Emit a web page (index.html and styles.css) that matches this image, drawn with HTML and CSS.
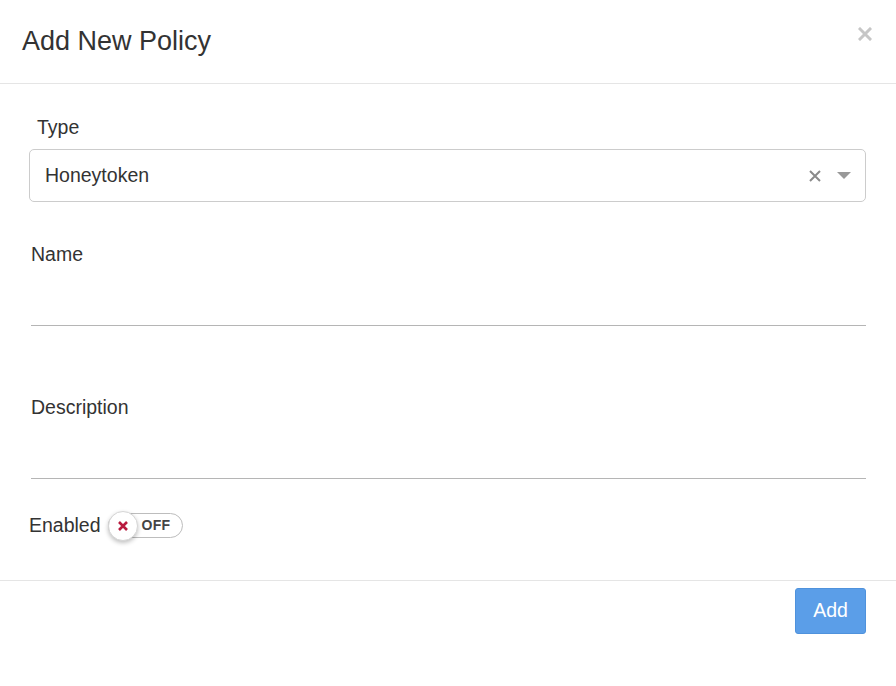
FILE: index.html
```html
<!DOCTYPE html>
<html lang="en">
<head>
<meta charset="utf-8">
<title>Add New Policy</title>
<link rel="stylesheet" href="styles.css">
</head>
<body>
<div class="modal">
  <div class="modal-header">
    <h4 class="modal-title">Add New Policy</h4>
    <button class="close" type="button" aria-label="Close">
      <svg width="14" height="14" viewBox="0 0 14 14"><path d="M2 2L12 12M12 2L2 12" stroke="#c6c6c6" stroke-width="3" stroke-linecap="square"/></svg>
    </button>
  </div>
  <div class="modal-body">
    <div class="group">
      <label class="label label-type">Type</label>
      <div class="select">
        <span class="select-value">Honeytoken</span>
        <span class="select-icons">
          <svg class="clear" width="12" height="12" viewBox="0 0 12 12"><path d="M1 1L11 11M11 1L1 11" stroke="#8a8a8a" stroke-width="2"/></svg>
          <svg class="caret" width="14" height="8" viewBox="0 0 14 8"><path d="M0 0H14L7 7Z" fill="#999"/></svg>
        </span>
      </div>
    </div>
    <div class="group group-text">
      <label class="label">Name</label>
      <div class="line-input"></div>
    </div>
    <div class="group group-text group-desc">
      <label class="label">Description</label>
      <div class="line-input"></div>
    </div>
    <div class="enabled-row">
      <span class="enabled-label">Enabled</span>
      <span class="toggle">
        <span class="knob">
          <svg width="12" height="12" viewBox="0 0 12 12"><path d="M2 2L10 10M10 2L2 10" stroke="#b81a3e" stroke-width="2.6"/></svg>
        </span>
        <span class="toggle-text">OFF</span>
      </span>
    </div>
  </div>
  <div class="modal-footer">
    <button class="btn-add" type="button">Add</button>
  </div>
</div>
</body>
</html>
```

FILE: styles.css
```css
* { box-sizing: border-box; }
html, body { margin: 0; padding: 0; background: #fff; }
body {
  font-family: "Liberation Sans", Arial, Helvetica, sans-serif;
  color: #333;
  width: 896px;
  height: 686px;
  overflow: hidden;
}
.modal { width: 896px; }
.modal-header {
  display: flex;
  justify-content: space-between;
  align-items: flex-start;
  padding: 26px 24px 27px 22px;
  border-bottom: 1px solid #e5e5e5;
}
.modal-title {
  margin: 0;
  font-size: 27px;
  font-weight: 400;
  line-height: 30px;
  color: #333;
}
.close {
  border: 0;
  background: none;
  padding: 0;
  margin-top: 1px;
  width: 14px;
  height: 14px;
  display: block;
}
.close svg { display: block; }
.modal-body {
  padding: 29px 30px 40px 30px;
}
.label {
  display: block;
  font-size: 19.5px;
  line-height: 28px;
  height: 28px;
  color: #333;
}
.label-type { padding-left: 7px; }
.select {
  margin-top: 8px;
  margin-left: -1px;
  height: 53px;
  border: 1px solid #ccc;
  border-radius: 5px;
  display: flex;
  align-items: center;
  justify-content: space-between;
  padding: 0 14px 0 15px;
}
.select-value {
  font-size: 19.5px;
  color: #333;
}
.select-icons {
  display: flex;
  align-items: center;
  gap: 16px;
}
.select-icons svg { display: block; }
.group-text { margin-top: 38px; margin-left: 1px; }
.group-desc { margin-top: 67px; }
.line-input {
  height: 58px;
  border-bottom: 1px solid #b5b5b5;
}
.enabled-row {
  margin-top: 31px;
  height: 30px;
  display: flex;
  align-items: center;
  gap: 7px;
}
.enabled-label {
  font-size: 19.5px;
  color: #333;
  margin-left: -1px;
}
.toggle {
  position: relative;
  width: 75px;
  height: 25px;
  border: 1px solid #bdbdbd;
  border-radius: 13px;
  background: #fff;
  display: flex;
  align-items: center;
}
.knob {
  position: absolute;
  left: -1px;
  top: -3px;
  width: 30px;
  height: 30px;
  border-radius: 50%;
  background: #fff;
  border: 1px solid #d6d6d6;
  box-shadow: 0 2px 4px rgba(0,0,0,0.25);
  display: flex;
  align-items: center;
  justify-content: center;
}
.knob svg { display: block; }
.toggle-text {
  margin-left: 33px;
  font-size: 14px;
  font-weight: 700;
  color: #444;
  letter-spacing: 0.3px;
}
.modal-footer {
  border-top: 1px solid #e5e5e5;
  padding: 7px 30px 0 0;
  display: flex;
  justify-content: flex-end;
}
.btn-add {
  width: 71px;
  height: 46px;
  border: 1px solid #4f92dc;
  border-radius: 3px;
  background: #5b9ee8;
  color: #fff;
  font-family: "Liberation Sans", Arial, sans-serif;
  font-size: 19.5px;
  padding: 0 0 2px 0;
}
```
